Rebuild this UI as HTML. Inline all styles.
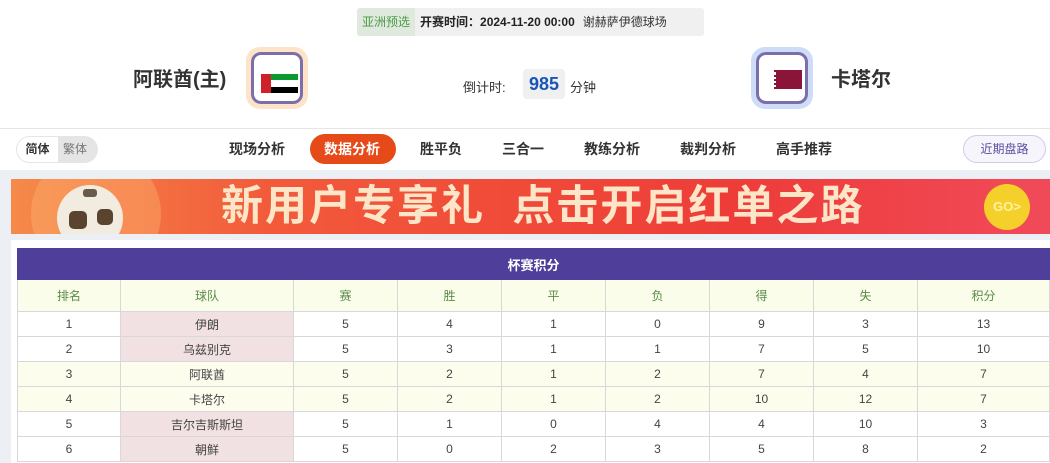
<!DOCTYPE html>
<html><head><meta charset="utf-8"><style>
*{margin:0;padding:0;box-sizing:border-box}
body{width:1050px;height:463px;overflow:hidden;background:#fff;font-family:"Liberation Sans","Noto Sans CJK SC",sans-serif;color:#333;position:relative}
.abs{position:absolute}
.top{left:357px;top:8px;width:347px;height:28px;background:#f0f0f0;border-radius:3px;font-size:12px;line-height:28px;white-space:nowrap}
.top .tag{display:inline-block;background:#dfe9dd;color:#4c9a48;padding:0 5px;border-radius:3px 0 0 3px}
.team{font-size:20px;font-weight:bold;color:#333}
.flagbox{width:62px;height:62px;border-radius:14px;padding:5px}
.flagin{width:100%;height:100%;border:3px solid #7b6fab;border-radius:10px;background:#fff;position:relative}
.nav{top:128px;left:0;width:1050px;height:42px;border-top:1px solid #e5e5e5}
.nav span{position:absolute;top:0;font-size:14px;font-weight:bold;line-height:41px;color:#333}
.gray{top:170px;left:0;width:1050px;height:293px;background:#eceff3}
.banner{left:11px;top:179px;width:1039px;height:55px;background:linear-gradient(90deg,#f58a4a 0%,#f25a3a 25%,#ee3c38 70%,#f04a5a 100%);overflow:hidden}
.panel{left:11px;top:240px;width:1039px;height:223px;background:#fff}
table{position:absolute;left:17px;top:248px;border-collapse:collapse;width:1033px;font-size:12px}
td{border:1px solid #d8d8d8;text-align:center;height:25px;color:#444}
tr.h td{height:32px;background:#fafde9;color:#5a8a4a}
tr.y td{background:#fdfdee}
td.t{background:#f2e1e3}
</style></head><body>
<div class="abs top"><span class="tag">亚洲预选</span><b style="margin-left:5px;color:#222">开赛时间：2024-11-20 00:00</b><span style="margin-left:8px">谢赫萨伊德球场</span></div>
<div class="abs team" style="left:133px;top:68px;line-height:24px">阿联酋(主)</div>
<div class="abs flagbox" style="left:246px;top:47px;background:#fde3c8"><div class="flagin">
<div class="abs" style="left:7px;top:19px;width:10px;height:19px;background:#d0202a"></div>
<div class="abs" style="left:17px;top:19px;width:27px;height:6px;background:#0a9a30"></div>
<div class="abs" style="left:17px;top:25px;width:27px;height:7px;background:#fff"></div>
<div class="abs" style="left:17px;top:32px;width:27px;height:6px;background:#000"></div>
</div></div>
<div class="abs" style="left:463px;top:77px;font-size:13px">倒计时:</div>
<div class="abs" style="left:523px;top:69px;width:42px;height:30px;background:#f0f0f0;border-radius:4px;text-align:center;line-height:30px;font-size:18px;font-weight:bold;color:#1a55b8">985</div>
<div class="abs" style="left:570px;top:77px;font-size:13px">分钟</div>
<div class="abs flagbox" style="left:751px;top:47px;background:#cfdcf8"><div class="flagin">
<div class="abs" style="left:8px;top:15px;width:9px;height:19px;background:#fff;border-right:2px dotted #8a1538"></div>
<div class="abs" style="left:17px;top:15px;width:26px;height:19px;background:#8a1538"></div>
</div></div>
<div class="abs team" style="left:831px;top:68px;line-height:24px">卡塔尔</div>
<div class="abs nav">
<div class="abs" style="left:16px;top:7px;width:82px;height:27px;border-radius:14px;background:#e5e5e5;border:1px solid #e5e5e5;overflow:hidden"><div style="width:41px;height:100%;background:#fff;font-size:12px;font-weight:bold;line-height:25px;text-align:center">简体</div><div class="abs" style="left:46px;top:0;font-size:12px;line-height:25px;color:#777">繁体</div></div>
<span style="left:229px">现场分析</span>
<div class="abs" style="left:310px;top:5px;width:86px;height:30px;border-radius:15px;background:#e64a19"></div>
<span style="left:324px;color:#fff">数据分析</span>
<span style="left:420px">胜平负</span>
<span style="left:502px">三合一</span>
<span style="left:584px">教练分析</span>
<span style="left:680px">裁判分析</span>
<span style="left:776px">高手推荐</span>
<div class="abs" style="left:963px;top:6px;width:83px;height:28px;border-radius:14px;border:1px solid #d0cbe8;background:#f6f5fc;font-size:12px;line-height:26px;text-align:center;color:#5a4ea0">近期盘路</div>
</div>
<div class="abs gray"></div>
<div class="abs banner">
<div class="abs" style="left:20px;top:-30px;width:130px;height:130px;border-radius:50%;background:rgba(255,190,120,.35)"></div>
<div class="abs" style="left:46px;top:6px;width:66px;height:66px;border-radius:50%;background:#f2ece0"><div class="abs" style="left:12px;top:26px;width:18px;height:18px;background:#5a4430;border-radius:5px"></div><div class="abs" style="left:40px;top:24px;width:16px;height:16px;background:#5a4430;border-radius:5px"></div><div class="abs" style="left:26px;top:4px;width:14px;height:8px;background:#6a5a4a;border-radius:3px"></div></div>
<div class="abs" style="left:210px;top:1px;font-size:42px;font-weight:bold;color:#fde6c8;letter-spacing:2px;line-height:52px;white-space:nowrap">新用户专享礼&nbsp;&nbsp;点击开启红单之路</div>
<div class="abs" style="left:973px;top:5px;width:46px;height:46px;border-radius:50%;background:#f6d02a;color:#fff3a0;font-size:13px;font-weight:bold;text-align:center;line-height:46px">GO&gt;</div>
</div>
<div class="abs panel"></div>
<table>
<tr><td colspan="9" style="background:#4f3f9a;color:#fff;font-weight:bold;font-size:13px;height:31px;border-color:#4f3f9a">杯赛积分</td></tr>
<tr class="h"><td style="width:103px">排名</td><td style="width:173px">球队</td><td style="width:104px">赛</td><td style="width:104px">胜</td><td style="width:104px">平</td><td style="width:104px">负</td><td style="width:104px">得</td><td style="width:104px">失</td><td>积分</td></tr>
<tr><td>1</td><td class="t">伊朗</td><td>5</td><td>4</td><td>1</td><td>0</td><td>9</td><td>3</td><td>13</td></tr>
<tr><td>2</td><td class="t">乌兹别克</td><td>5</td><td>3</td><td>1</td><td>1</td><td>7</td><td>5</td><td>10</td></tr>
<tr class="y"><td>3</td><td class="t">阿联酋</td><td>5</td><td>2</td><td>1</td><td>2</td><td>7</td><td>4</td><td>7</td></tr>
<tr class="y"><td>4</td><td class="t">卡塔尔</td><td>5</td><td>2</td><td>1</td><td>2</td><td>10</td><td>12</td><td>7</td></tr>
<tr><td>5</td><td class="t">吉尔吉斯斯坦</td><td>5</td><td>1</td><td>0</td><td>4</td><td>4</td><td>10</td><td>3</td></tr>
<tr><td>6</td><td class="t">朝鲜</td><td>5</td><td>0</td><td>2</td><td>3</td><td>5</td><td>8</td><td>2</td></tr>
</table>
</body></html>
